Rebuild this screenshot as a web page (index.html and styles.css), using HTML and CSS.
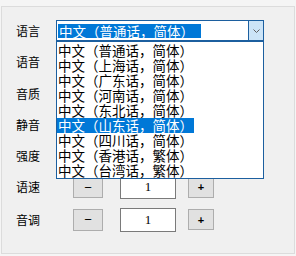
FILE: index.html
```html
<!DOCTYPE html>
<html lang="zh">
<head>
  <meta charset="UTF-8">
  <title>语音设置</title>
  <link rel="stylesheet" href="styles.css">
</head>
<body>
  <div class="panel">
    <div class="form">
      <!-- Language combo (dropped down) -->
      <span class="label">语言</span>
      <div class="combo">
        <span class="combo-text"><span class="sel">中文（普通话，简体）</span></span>
        <span class="combo-btn">
          <svg width="9" height="6" viewBox="0 0 9 6"><path d="M1.5 1.5 L4.5 4.5 L7.5 1.5" fill="none" stroke="#606060" stroke-width="1"/></svg>
        </span>
        <ul class="droplist">
          <li><span>中文（普通话，简体）</span></li>
          <li><span>中文（上海话，简体）</span></li>
          <li><span>中文（广东话，简体）</span></li>
          <li><span>中文（河南话，简体）</span></li>
          <li><span>中文（东北话，简体）</span></li>
          <li class="active"><span>中文（山东话，简体）</span></li>
          <li><span>中文（四川话，简体）</span></li>
          <li><span>中文（香港话，繁体）</span></li>
          <li><span>中文（台湾话，繁体）</span></li>
        </ul>
      </div>

      <span class="label">语音</span><div></div>
      <span class="label">音质</span><div></div>
      <span class="label">静音</span><div></div>
      <span class="label">强度</span><div></div>

      <span class="label">语速</span>
      <div class="spin">
        <button class="btn minus">−</button>
        <input class="num" type="text" value="1">
        <button class="btn plus">+</button>
      </div>

      <span class="label">音调</span>
      <div class="spin">
        <button class="btn minus">−</button>
        <input class="num" type="text" value="1">
        <button class="btn plus">+</button>
      </div>
    </div>
  </div>
</body>
</html>
```

FILE: styles.css
```css
/* Reset */
* { margin: 0; padding: 0; box-sizing: border-box; }

body {
  background: #f5f5f5;
  font-family: "Noto Sans CJK SC", "Noto Sans", sans-serif;
  width: 296px;
  height: 256px;
  overflow: hidden;
}

/* Outer panel */
.panel {
  margin: 6px 0 0 1px;
  width: 294px;
  height: 248px;
  background: #f0f0f0;
  border: 1px solid #dcdcdc;
  padding: 8px 0 0 14px;
}

.form {
  display: grid;
  grid-template-columns: 40px 1fr;
  grid-template-rows: 31px 32px 31px 31px 31px 32px 33px;
  align-items: center;
}

.label {
  font-size: 12px;
  line-height: 14px;
  color: #000;
}

/* Combo box */
.combo {
  position: relative;
  display: flex;
  width: 208px;
  height: 21px;
  background: #fff;
  border: 1px solid #1c5f9f;
}
.combo-text {
  flex: 1;
  display: flex;
  align-items: center;
  padding-left: 1px;
}
.sel {
  background: #0078d7;
  color: #fff;
  font-size: 13.5px;
  line-height: 14px;
  height: 14px;
  padding: 0 7px 0 1px;
  white-space: nowrap;
}
.combo-btn {
  width: 15px;
  background: #cce4f7;
  border-left: 1px solid #1c5f9f;
  display: flex;
  align-items: center;
  justify-content: center;
}

/* Dropped list */
.droplist {
  position: absolute;
  left: -1px;
  top: 20px;
  width: 208px;
  list-style: none;
  background: #fff;
  border: 1px solid #1c5f9f;
  padding: 1px 0 0 0;
  z-index: 5;
}
.droplist li {
  height: 15px;
  font-size: 13.5px;
  line-height: 15px;
  white-space: nowrap;
}
.droplist li span {
  display: inline-block;
  padding: 0 1px;
}
.droplist li.active span {
  background: #0078d7;
  color: #fff;
}

/* Spin rows */
.spin {
  display: flex;
  align-items: center;
  margin-left: 17px;
}
.btn {
  background: #e1e1e1;
  border: 1px solid #adadad;
  font-family: "Liberation Sans", sans-serif;
  font-size: 12px;
  color: #000;
}
.minus {
  width: 30px;
  height: 22px;
  margin-right: 17px;
  font-size: 13px;
}
.plus {
  width: 26px;
  height: 21px;
  margin-left: 12px;
  font-weight: bold;
  font-size: 11px;
}
.num {
  width: 56px;
  height: 24px;
  border: 1px solid #7a7a7a;
  background: #fff;
  text-align: center;
  font-family: "Liberation Serif", serif;
  font-size: 13px;
  color: #000;
  outline: none;
}
```
